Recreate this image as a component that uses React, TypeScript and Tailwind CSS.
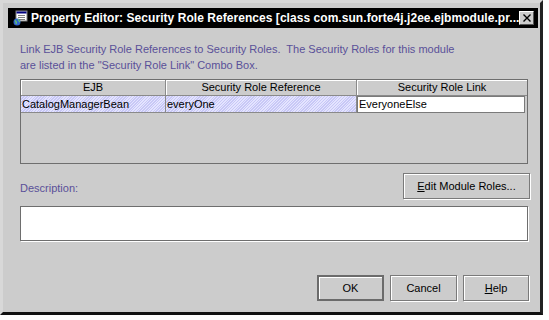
import React from "react";

function TitleIcon() {
  return (
    <svg width="16" height="16" viewBox="0 0 16 16" className="shrink-0">
      <rect x="4" y="1" width="11" height="10" fill="#ffffff" stroke="#808080" strokeWidth="1" />
      <rect x="4.5" y="1.5" width="10" height="2" fill="#000080" />
      <line x1="6" y1="5.5" x2="13" y2="5.5" stroke="#808080" />
      <line x1="6" y1="7.5" x2="13" y2="7.5" stroke="#808080" />
      <line x1="6" y1="9.5" x2="13" y2="9.5" stroke="#808080" />
      <circle cx="5" cy="12" r="3.5" fill="#3366cc" />
      <path d="M3 10.5 Q5 12 4 14 M6 9 Q7 11 8 12" stroke="#66cc66" strokeWidth="1.2" fill="none" />
    </svg>
  );
}

function Btn({ children, w, def }: { children: React.ReactNode; w: string; def?: boolean }) {
  return (
    <div
      className={
        "flex items-center justify-center h-[26px] bg-[#cccccc] text-[11px] text-black " +
        w +
        (def
          ? " border-2 border-[#6b6b6b] shadow-[inset_1px_1px_0_#ffffff]"
          : " border border-[#7a7a7a] shadow-[inset_1px_1px_0_#ffffff,1px_1px_0_#ffffff]")
      }
    >
      {children}
    </div>
  );
}

export default function App() {
  return (
    <div
      className="w-[549px] h-[320px] bg-white"
      style={{ fontFamily: '"Liberation Sans", Arial, sans-serif' }}
    >
      <div className="w-[543px] h-[315px] bg-[#cccccc] border-t-[3px] border-l-[3px] border-t-[#d8d8d8] border-l-[#d8d8d8] border-r-[3px] border-b-[3px] border-r-[#222222] border-b-[#111111] pt-[5px] pl-[5px] pr-[2px] flex flex-col">
        <div className="h-[20px] bg-black flex items-center pl-[4px] pr-[4px]">
          <TitleIcon />
          <span className="ml-[3px] text-white font-bold text-[12px] whitespace-nowrap tracking-[0.05px]">
            Property Editor: Security Role References [class com.sun.forte4j.j2ee.ejbmodule.pr...
          </span>
          <div className="ml-auto w-[16px] h-[14px] bg-[#cccccc] border border-t-white border-l-white border-r-[#555] border-b-[#555] flex items-center justify-center">
            <svg width="8" height="8" viewBox="0 0 8 8">
              <path d="M0.5 0.5 L7.5 7.5 M7.5 0.5 L0.5 7.5" stroke="#000" strokeWidth="1.4" />
            </svg>
          </div>
        </div>

        <div className="pl-[12px] pr-[8px] flex flex-col">
          <div className="mt-[13px] text-[11px] leading-[16px] text-[#5a5099]">
            <div>Link EJB Security Role References to Security Roles.&nbsp; The Security Roles for this module</div>
            <div>are listed in the "Security Role Link" Combo Box.</div>
          </div>

          <div className="mt-[6px] h-[85px] w-[508px] border border-[#6e6e6e] bg-[#cccccc] flex flex-col text-[11px] text-black">
            <div className="flex h-[16px]">
              <div className="w-[145px] border-r border-b border-[#8a8a8a] shadow-[inset_1px_1px_0_#ffffff] flex items-center justify-center">EJB</div>
              <div className="w-[191px] border-r border-b border-[#8a8a8a] shadow-[inset_1px_1px_0_#ffffff] flex items-center justify-center">Security Role Reference</div>
              <div className="flex-1 border-b border-[#8a8a8a] shadow-[inset_1px_1px_0_#ffffff] flex items-center justify-center">Security Role Link</div>
            </div>
            <div className="flex h-[17px]">
              <div className="w-[145px] border-r border-b border-[#8a8a8a] bg-[#d4d4fa] bg-[repeating-linear-gradient(135deg,#c8c8f6_0px,#c8c8f6_1px,#e4e4ff_1px,#e4e4ff_2px)] flex items-center pl-[1px]">CatalogManagerBean</div>
              <div className="w-[191px] border-r border-b border-[#8a8a8a] bg-[#d4d4fa] bg-[repeating-linear-gradient(135deg,#c8c8f6_0px,#c8c8f6_1px,#e4e4ff_1px,#e4e4ff_2px)] flex items-center pl-[1px]">everyOne</div>
              <div className="flex-1 bg-white border border-[#7a7a7a] mr-[2px] flex items-center pl-[1px]">EveryoneElse</div>
            </div>
          </div>

          <div className="mt-[9px] flex items-center">
            <span className="text-[11px] text-[#5a5099] pt-[5px]">Description:</span>
            <div className="ml-auto">
              <Btn w="w-[127px] h-[25px]">
                <span>
                  <span className="underline">E</span>dit Module Roles...
                </span>
              </Btn>
            </div>
          </div>

          <div className="mt-[7px] w-[508px] h-[35px] bg-white border border-[#6e6e6e] shadow-[1px_1px_0_#ffffff]" />

          <div className="mt-[34px] flex justify-end gap-[6px] w-[509px]">
            <Btn w="w-[67px]" def>
              OK
            </Btn>
            <Btn w="w-[67px]">Cancel</Btn>
            <Btn w="w-[66px]">
              <span>
                <span className="underline">H</span>elp
              </span>
            </Btn>
          </div>
        </div>
      </div>
    </div>
  );
}
